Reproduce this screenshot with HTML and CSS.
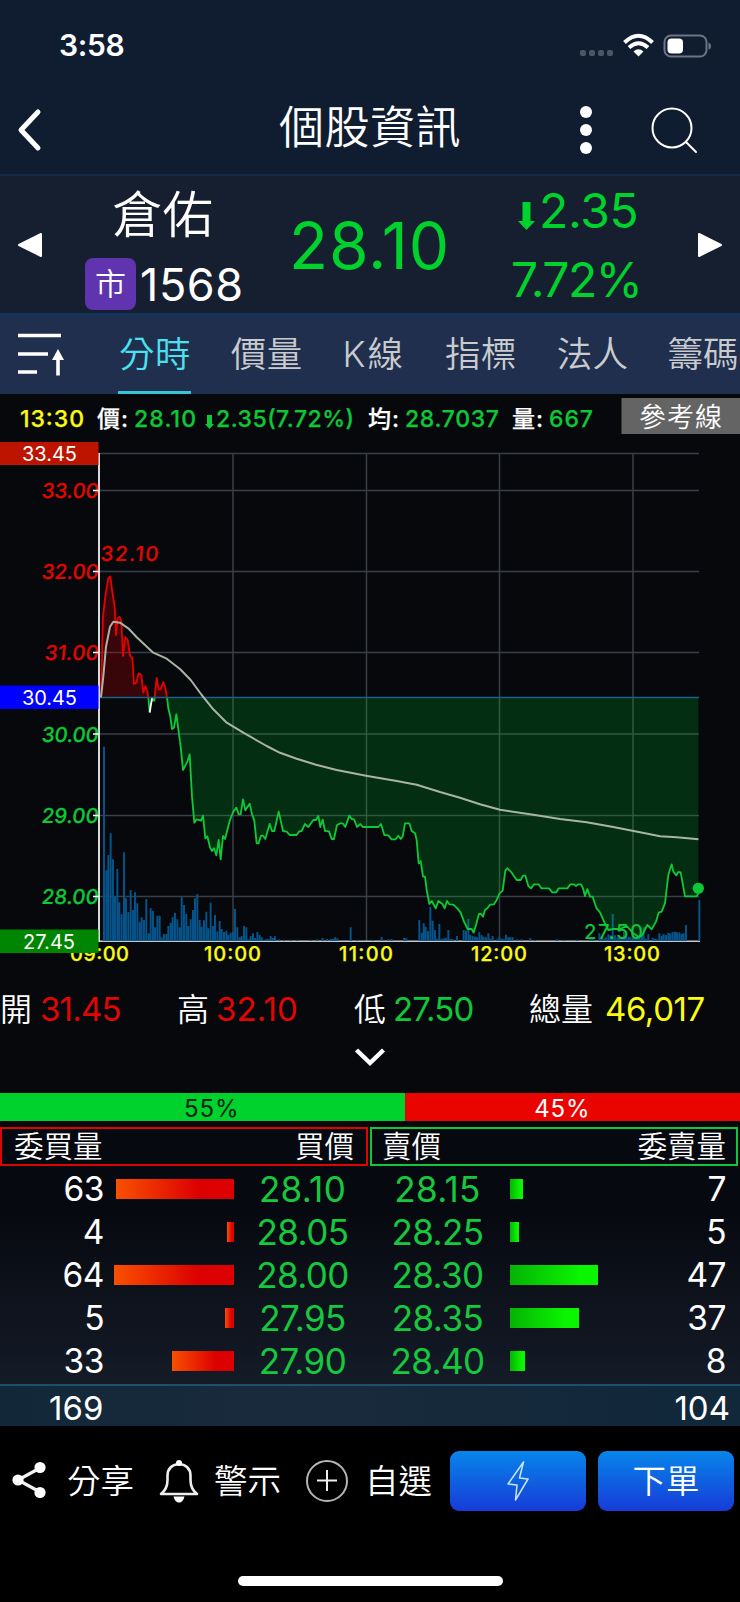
FILE: index.html
```html
<!DOCTYPE html>
<html lang="zh-Hant">
<head>
<meta charset="utf-8">
<title>個股資訊</title>
<link rel="stylesheet" href="styles.css">
</head>
<body>
<div class="app">
  <div class="status">
    <span class="clock">3:58</span>
    <svg class="status-icons" width="134" height="30" viewBox="0 0 134 30">
      <g fill="#4d5667"><rect x="2" y="20" width="6" height="6" rx="2"/><rect x="11" y="20" width="6" height="6" rx="2"/><rect x="20" y="20" width="6" height="6" rx="2"/><rect x="29" y="20" width="6" height="6" rx="2"/></g>
      <g fill="none" stroke="#fff" stroke-width="4"><path d="M46.500 12.500Q60.500 -1 74.500 12.500"/><path d="M51 17.500Q60.500 9 70 17.500"/></g>
      <path d="M55.500 21.500Q60.500 17 65.500 21.500L60.500 26.500Z" fill="#fff"/>
      <rect x="86.500" y="5.500" width="42" height="21" rx="6.500" fill="none" stroke="#6d7584" stroke-width="2"/>
      <path d="M130.500 12.500Q133 13 133 16Q133 19 130.500 19.500Z" fill="#6d7584"/>
      <rect x="89.500" y="8.500" width="15.500" height="15" rx="4" fill="#fff"/>
    </svg>
  </div>
  <header class="nav">
    <svg class="back" width="26" height="44" viewBox="0 0 26 44"><path d="M22 4L5 22L22 40" fill="none" stroke="#fff" stroke-width="5" stroke-linecap="round" stroke-linejoin="round"/></svg>
    <h1>個股資訊</h1>
    <svg class="more" width="14" height="50" viewBox="0 0 14 50" fill="#fff"><circle cx="7" cy="7" r="6"/><circle cx="7" cy="25" r="6"/><circle cx="7" cy="43" r="6"/></svg>
    <svg class="search" width="50" height="50" viewBox="0 0 50 50" fill="none" stroke="#fff" stroke-width="2"><circle cx="22" cy="22" r="19.500"/><path d="M36.500 36.500L46 46" stroke-linecap="round"/></svg>
  </header>
  <section class="quote">
    <svg class="arrow" width="26" height="26" viewBox="0 0 26 26"><path d="M2 13L24 2V24Z" fill="#fff" stroke="#fff" stroke-width="2" stroke-linejoin="round"/></svg>
    <div class="stock">
      <div class="name">倉佑</div>
      <div class="code"><span class="badge">市</span><span class="num">1568</span></div>
    </div>
    <div class="price">28.10</div>
    <div class="change">
      <div class="delta"><svg width="19" height="28" viewBox="0 0 19 28"><path d="M5.500 0H13.500V19H18L9.500 28L1 19H5.500Z" fill="#00d22d"/></svg><span>2.35</span></div>
      <div class="pct">7.72%</div>
    </div>
    <svg class="arrow" width="26" height="26" viewBox="0 0 26 26"><path d="M24 13L2 2V24Z" fill="#fff" stroke="#fff" stroke-width="2" stroke-linejoin="round"/></svg>
  </section>
  <nav class="tabs">
    <svg class="sort" width="48" height="46" viewBox="0 0 48 46"><path d="M0 5.500H43M0 24H30M0 42H19" stroke="#fff" stroke-width="3.600"/><path d="M40 45.500V28" stroke="#fff" stroke-width="3.600"/><path d="M40 19L46 30H34Z" fill="#fff"/></svg>
    <span class="tab on">分時</span><span class="tab">價量</span><span class="tab k">K線</span><span class="tab">指標</span><span class="tab">法人</span><span class="tab last">籌碼</span>
  </nav>
  <section class="chartbox">
    <svg class="chart" width="740" height="586" viewBox="0 394 740 586">
      <g class="info">
        <text class="y" x="20" y="427" textLength="64">13:30</text>
        <text class="w" x="97" y="427" textLength="31">價:</text>
        <text class="g" x="134" y="427" textLength="62">28.10</text>
        <path d="M207 415H212V424H214L209.500 429L205 424H207Z" fill="#0ec837"/>
        <text class="g" x="216" y="427" textLength="138">2.35(7.72%)</text>
        <text class="w" x="368" y="427" textLength="31">均:</text>
        <text class="g" x="405" y="427" textLength="94">28.7037</text>
        <text class="w" x="512" y="427" textLength="31">量:</text>
        <text class="g" x="549" y="427" textLength="44">667</text>
      </g>
      <rect x="621.500" y="398" width="118.500" height="36" fill="#646464"/>
      <text class="ref" x="639" y="426.500" textLength="83">參考線</text>
      <path class="grid" d="M99 453.500H699M99 490.500H699M99 571.500H699M99 652.500H699M99 734H699M99 815.500H699M99 896.500H699M233 454V941M366.500 454V941M499.500 454V941M633 454V941"/>
      <path d="M99 941.300H700" stroke="#c4c8ca" stroke-width="1.600"/>
      <g transform="translate(90 730) scale(.33333)">
        <path class="vol" d="M42 633V50M49 633V421M55 633V375M62 633V310M69 633V388M75 633V498M82 633V417M88 633V517M95 633V553M102 633V367M108 633V505M115 633V546M122 633V480M129 633V540M135 633V487M142 633V520M149 633V575M155 633V562M162 633V570M169 633V507M176 633V610M182 633V535M189 633V543M195 633V592M202 633V557M209 633V557M215 633V622M222 633V612M229 633V612M235 633V588M242 633V578M248 633V562M255 633V548M262 633V568M269 633V592M275 633V500M282 633V525M289 633V552M295 633V588M302 633V568M309 633V540M315 633V505M322 633V492M329 633V570M335 633V590M342 633V571M349 633V545M355 633V595M362 633V518M369 633V588M375 633V555M382 633V605M389 633V573M395 633V597M402 633V606M409 633V602M415 633V615M422 633V608M429 633V606M435 633V537M442 633V592M449 633V622M455 633V618M462 633V588M469 633V592M475 633V628M482 633V618M489 633V610M495 633V624M502 633V606M509 633V614M515 633V622M522 633V630M529 633V627M535 633V628M542 633V618M549 633V624M555 633V619M568 633V628M582 633V629M602 633V629M622 633V629M662 633V629M682 633V628M698 633V624M711 633V627M722 633V627M729 633V627M735 633V622M742 633V625M782 633V592M802 633V629M848 633V629M875 633V621M895 633V628M905 633V627M942 633V624M949 633V625M988 633V570"/>
      </g>
      <g transform="translate(400 750) scale(.33333)">
        <path class="vol" d="M12 573V565M18 573V566M65 573V548M71 573V520M77 573V530M84 573V543M91 573V470M98 573V512M105 573V540M111 573V566M118 573V522M125 573V567M131 573V565M138 573V563M145 573V540M152 573V567M158 573V568M171 573V558M191 573V540M198 573V542M205 573V507M211 573V555M218 573V558M225 573V560M231 573V562M238 573V546M245 573V556M251 573V560M258 573V562M265 573V550M271 573V566M278 573V558M291 573V568M298 573V560M305 573V566M311 573V568M318 573V554M325 573V562M331 573V562M338 573V562M351 573V568M365 573V568M391 573V564M405 573V569M471 573V568M491 573V569M531 573V569M571 573V568M578 573V568M598 573V550M605 573V560M611 573V566M618 573V562M625 573V553M632 573V556M638 573V492M645 573V556M652 573V562M658 573V563M665 573V560M672 573V545M678 573V552M685 573V560M691 573V562M698 573V563M705 573V560M711 573V558M718 573V562M725 573V560M731 573V530M738 573V566M745 573V552M758 573V563M765 573V566M771 573V568M778 573V550M785 573V557M791 573V552M798 573V555M805 573V548M811 573V550M818 573V546M825 573V545M831 573V547M838 573V547M845 573V552M851 573V550M858 573V525M898 573V450"/>
      </g>
      <g transform="translate(0 500) scale(.33333)">
        <path class="up-fill" d="M303 592L309 350L316 288L325 235L331 229L336 270L344 320L348 405L353 355L359 350L364 365L369 468L376 411L383 420L390 467L397 474L402 552L409 548L416 520L424 525L430 578L436 558L442 575L445 592ZM464 592L470 534L476 568L482 568L490 546L496 564L501 592Z"/>
        <path class="down-fill" d="M501 592L505 625L511 650L516 687L522 683L529 643L540 740V592Z"/>
        <path class="up-line" d="M303 592L309 350L316 288L325 235L331 229L336 270L344 320L348 405L353 355L359 350L364 365L369 468L376 411L383 420L390 467L397 474L402 552L409 548L416 520L424 525L430 578L436 558L442 575L445 592M464 592L470 534L476 568L482 568L490 546L496 564L501 592"/>
        <path class="down-line" d="M445 592L449 636M457 594L459 602H463L464 592M501 592L505 625L511 650L516 687L522 683L529 643L540 725"/>
        <path class="down-line turn" d="M449 638L456 594"/>
      </g>
      <g transform="translate(90 730) scale(.33333)">
        <path class="down-fill" d="M270 -98V40L279 120L292 95L299 73L306 200L313 278L320 268L333 272L339 257L346 325L352 319L360 352L366 363L372 355L379 376L386 330L392 388L399 318L405 327L420 270L430 245L439 233L446 253L452 253L459 208L466 241L479 221L486 253L493 272L500 340L506 340L513 317L519 317L526 327L539 282L546 303L553 303L566 245L579 303L590 305L599 315L620 315L628 304L635 303L645 282L655 291L670 270L678 270L685 258L691 291L698 269L705 303L717 304L725 327L732 327L741 285L751 280L758 280L766 291L778 257L785 267L792 268L801 291L811 282L818 291L865 291L873 282L883 315L895 316L905 328L917 328L925 317L932 327L938 320L945 280L958 280L965 303L975 310L980 330L986 400L990 398V-98Z"/>
        <path class="down-line" d="M270 35L272 50L279 120L292 95L299 73L306 200L313 278L320 268L333 272L339 257L346 325L352 319L360 352L366 363L372 355L379 376L386 330L392 388L399 318L405 327L420 270L430 245L439 233L446 253L452 253L459 208L466 241L479 221L486 253L493 272L500 340L506 340L513 317L519 317L526 327L539 282L546 303L553 303L566 245L579 303L590 305L599 315L620 315L628 304L635 303L645 282L655 291L670 270L678 270L685 258L691 291L698 269L705 303L717 304L725 327L732 327L741 285L751 280L758 280L766 291L778 257L785 267L792 268L801 291L811 282L818 291L865 291L873 282L883 315L895 316L905 328L917 328L925 317L932 327L938 320L945 280L958 280L965 303L975 310L980 330L986 400L990 398"/>
      </g>
      <g transform="translate(400 750) scale(.33333)">
        <path class="down-fill" d="M60 -158V338L62 333L69 380L75 380L80 420L88 462L95 453L107 475L115 453L128 463L134 475L141 453L148 463L160 464L172 475L182 488L192 515L203 537L215 537L221 548L228 525L237 492L243 492L249 500L255 480L262 475L270 464L282 463L290 450L299 430L308 422L316 362L322 355L335 368L350 390L362 390L369 377L376 377L385 408L393 415L402 403L416 403L424 415L447 415L457 427L469 427L476 415L502 415L511 403L521 403L528 408L535 403L543 403L549 415L555 438L562 417L570 440L578 440L585 462L590 475L600 487L612 515L625 540L640 537L660 537L680 528L700 550L715 560L725 558L742 525L755 538L768 515L776 488L785 485L795 460L805 375L815 343L820 365L829 376L835 366L842 367L848 400L855 439L890 439L895 430V-158Z"/>
        <path class="down-line" d="M60 338L62 333L69 380L75 380L80 420L88 462L95 453L107 475L115 453L128 463L134 475L141 453L148 463L160 464L172 475L182 488L192 515L203 537L215 537L221 548L228 525L237 492L243 492L249 500L255 480L262 475L270 464L282 463L290 450L299 430L308 422L316 362L322 355L335 368L350 390L362 390L369 377L376 377L385 408L393 415L402 403L416 403L424 415L447 415L457 427L469 427L476 415L502 415L511 403L521 403L528 408L535 403L543 403L549 415L555 438L562 417L570 440L578 440L585 462L590 475L600 487L612 515L625 540L640 537L660 537L680 528L700 550L715 560L725 558L742 525L755 538L768 515L776 488L785 485L795 460L805 375L815 343L820 365L829 376L835 366L842 367L848 400L855 439L890 439L895 430"/>
        <circle cx="895" cy="415" r="17" fill="#0ec837"/>
      </g>
      <path d="M99 697.500H699" stroke="#1f5f8c" stroke-width="1.400"/>
      <path class="avg" d="M101 697.300L103.300 676.700L106 646.700L110 626.700L113.300 621.700L120 622.700L128.300 628.300L136.700 637.300L145 645L153.300 652.700L166.700 658.700L180 669L190.700 680L201.700 695L213.300 709.300L226.700 722.700L243.300 732.700L266.700 746L280 752.800L296.700 758.700L316 764.800L336.700 770L366 775.700L396.700 781L416.700 784.700L440 792L460 797.700L480 804.300L500 809.700L533.300 814.700L560 819L586.700 822.300L613.300 827L640 832.300L660 836.300L676.700 837.300L698.500 839.300"/>
      <path d="M99 453V942" stroke="#f0f2f2" stroke-width="1.800"/>
      <g class="axis">
        <text class="r" transform="translate(41 498) skewX(-7)" textLength="57">33.00</text>
        <text class="r" transform="translate(41 579) skewX(-7)" textLength="57">32.00</text>
        <text class="r" transform="translate(44 660) skewX(-7)" textLength="54">31.00</text>
        <text class="g" transform="translate(41 741.500) skewX(-7)" textLength="57">30.00</text>
        <text class="g" transform="translate(41 823) skewX(-7)" textLength="57">29.00</text>
        <text class="g" transform="translate(41 904) skewX(-7)" textLength="57">28.00</text>
        <text class="r" transform="translate(100 561) skewX(-5)" textLength="58">32.10</text>
        <text class="g thin" x="584" y="938.500" textLength="59">27.50</text>
      </g>
      <path d="M93 490.500H99M93 571.500H99M93 652.500H99M93 734H99M93 815.500H99M93 896.500H99" stroke="#fff" stroke-width="1.500"/>
      <g class="time">
        <text x="70" y="960.500" textLength="59">09:00</text>
        <text x="204" y="960.500" textLength="57">10:00</text>
        <text x="339" y="960.500" textLength="54">11:00</text>
        <text x="471" y="960.500" textLength="56">12:00</text>
        <text x="604" y="960.500" textLength="56">13:00</text>
      </g>
      <g class="tag">
        <rect x="0" y="442" width="98.500" height="23" fill="#bd1400"/><text x="22" y="461" textLength="55">33.45</text>
        <rect x="0" y="685.500" width="98.500" height="23.500" fill="#0000fe"/><text x="22" y="704.500" textLength="55">30.45</text>
        <rect x="0" y="929.500" width="98.500" height="23.500" fill="#008500"/><text x="23" y="948.500" textLength="52">27.45</text>
      </g>
    </svg>
  </section>
  <section class="ohlc">
    <span class="cell c1"><b>開</b><i class="r">31.45</i></span>
    <span class="cell c2"><b>高</b><i class="r">32.10</i></span>
    <span class="cell c3"><b>低</b><i class="g">27.50</i></span>
    <span class="cell c4"><b>總量</b><i class="y">46,017</i></span>
  </section>
  <div class="expand"><svg width="32" height="22" viewBox="0 0 32 22"><path d="M2.500 3L16 16L29.500 3" fill="none" stroke="#fff" stroke-width="4.500"/></svg></div>
  <div class="ratio"><div class="buy">55%</div><div class="sell">45%</div></div>
  <div class="heads"><div class="head bid"><span>委買量</span><span>買價</span></div><div class="head ask"><span>賣價</span><span>委賣量</span></div></div>
  <section class="book">
    <div class="row first"><span class="qty">63</span><span class="bar"><i style="width:118px"></i></span><span class="px">28.10</span><span class="px">28.15</span><span class="bar a"><i style="width:13px"></i></span><span class="qty">7</span></div>
    <div class="row"><span class="qty">4</span><span class="bar"><i style="width:7px"></i></span><span class="px">28.05</span><span class="px">28.25</span><span class="bar a"><i style="width:9px"></i></span><span class="qty">5</span></div>
    <div class="row"><span class="qty">64</span><span class="bar"><i style="width:120px"></i></span><span class="px">28.00</span><span class="px">28.30</span><span class="bar a"><i style="width:88px"></i></span><span class="qty">47</span></div>
    <div class="row"><span class="qty">5</span><span class="bar"><i style="width:9px"></i></span><span class="px">27.95</span><span class="px">28.35</span><span class="bar a"><i style="width:69px"></i></span><span class="qty">37</span></div>
    <div class="row"><span class="qty">33</span><span class="bar"><i style="width:62px"></i></span><span class="px">27.90</span><span class="px">28.40</span><span class="bar a"><i style="width:15px"></i></span><span class="qty">8</span></div>
  </section>
  <div class="total"><span>169</span><span>104</span></div>
  <footer class="foot">
    <svg class="i1" width="36" height="40" viewBox="0 0 36 40"><path d="M28 8L6 20L28 32" fill="none" stroke="#f2f2f2" stroke-width="3.200"/><g fill="#fff"><circle cx="28" cy="7.500" r="5.600"/><circle cx="6" cy="20" r="5.600"/><circle cx="28" cy="32.500" r="5.600"/></g></svg>
    <span class="l1">分享</span>
    <svg class="i2" width="40" height="44" viewBox="0 0 40 44"><path d="M2 35Q8.500 30 8.500 21V17Q8.500 6 20 5Q31.500 6 31.500 17V21Q31.500 30 38 35Z" fill="none" stroke="#eee" stroke-width="2.600" stroke-linejoin="round"/><circle cx="20" cy="4" r="3" fill="#fff"/><path d="M14.500 37.500H25.500Q24 43.500 20 43.500Q16 43.500 14.500 37.500Z" fill="#fff"/></svg>
    <span class="l2">警示</span>
    <svg class="i3" width="44" height="44" viewBox="0 0 44 44" fill="none"><circle cx="22" cy="22" r="20" stroke="#b5b5b5" stroke-width="2"/><path d="M12 21.500H32M22 11V32" stroke="#eee" stroke-width="2"/></svg>
    <span class="l3">自選</span>
    <button class="btn flash"><svg width="24" height="42" viewBox="0 0 24 42"><path d="M17.500 2L2 24L11 25L9.500 40L22 19L13.500 18Z" fill="none" stroke="#c9e6ff" stroke-width="1.500" stroke-linejoin="round"/></svg></button>
    <button class="btn order">下單</button>
  </footer>
  <div class="home"><div class="home-bar"></div></div>
</div>
</body>
</html>
```
FILE: styles.css
```css
* { box-sizing: border-box; }
body { margin: 0; background: #000; font-family: Inter, "Noto Sans CJK TC", sans-serif; color: #fff; }
.app { width: 740px; height: 1602px; overflow: hidden; display: flex; flex-direction: column; background: #000; }
.app > * { flex-shrink: 0; }
svg { display: block; flex-shrink: 0; }

.status { height: 90px; background: #101c30; display: flex; justify-content: space-between; padding: 30px 28px 0 59px; }
.clock { font-size: 30px; font-weight: 600; line-height: 31px; letter-spacing: -0.3px; }
.nav { height: 86px; background: #101c30; border-bottom: 2px solid #12294a; display: flex; align-items: flex-start; }
.back { margin: 18px 0 0 16px; }
.nav h1 { margin: 9px 0 0 237px; width: 182px; font-size: 45px; font-weight: 350; line-height: 58px; white-space: nowrap; letter-spacing: .5px; }
.more { margin: 15px 0 0 118px; }
.search { margin: 16px 0 0 57px; }

.quote { height: 137px; background: #151f2f; display: flex; align-items: flex-start; color: #00d22d; }
.quote .arrow { margin: 56px 0 0 17px; }
.stock { width: 177px; margin-left: 41px; color: #fff; }
.name { height: 82px; font-size: 50.500px; line-height: 78px; padding-left: 28px; font-weight: 350; }
.code { display: flex; align-items: center; height: 52px; margin-left: 1px; }
.badge { width: 51px; height: 52px; border-radius: 8px; background: #5f34ae; font-size: 31px; font-weight: 350; line-height: 52px; text-align: center; }
.code .num { font-size: 45px; line-height: 53px; margin-left: 4px; letter-spacing: .6px; }
.price { width: 190px; margin-left: 28px; font-size: 64px; line-height: 140px; letter-spacing: .9px; }
.change { width: 150px; margin-left: 24px; font-size: 48px; }
.delta { display: flex; height: 68px; line-height: 70px; padding-left: 14px; letter-spacing: -.3px; }
.delta svg { margin: 26px 3px 0 0; }
.pct { line-height: 71px; padding-left: 8px; letter-spacing: -1.5px; }
.quote .arrow:last-child { margin-left: 44px; }

.tabs { height: 81px; border-top: 3px solid #13345a; background: #1f2f4d; display: flex; color: #c9cbce; white-space: nowrap; }
.sort { margin: 14px 52px 0 18px; }
.tab { font-size: 35.500px; font-weight: 350; line-height: 77px; height: 78px; width: 72.500px; margin-right: 39.300px; padding-left: 1px; flex-shrink: 0; letter-spacing: .4px; }
.tab.k { width: 63px; letter-spacing: 2px; }
.tab.on { color: #4ce0f0; border-bottom: 3px solid #35c5d4; }
.tab.last { width: 71px; margin-right: 0; padding-left: 0; letter-spacing: 0; }

.chartbox { height: 586px; background: #06080c; }
.info { font-size: 23px; font-weight: 500; stroke-width: .25; }
.info .g, .axis .g { stroke: #0ec837; }
.info .y { stroke: #fbfb10; }
.info .w { stroke: #fff; }
.w { fill: #fff; }
.r { fill: #e10600; color: #e10600; }
.g { fill: #0ec837; color: #0ec837; }
.y { fill: #fbfb10; color: #fbfb10; }
.ref { font-size: 27px; fill: #fff; font-weight: 350; }
.grid { stroke: #3b3e46; stroke-width: 1.5; fill: none; }
.vol { stroke: #05558c; stroke-width: 5.8; fill: none; }
.up-fill { fill: rgba(200, 0, 0, .26); }
.down-fill { fill: rgba(0, 200, 40, .2); }
.up-line, .down-line { fill: none; stroke: #e60000; stroke-width: 5.5; stroke-linejoin: round; }
.down-line { stroke: #0ec837; }
.down-line.turn { stroke: #fff; }
.avg { fill: none; stroke: #a9b3a6; stroke-width: 2; stroke-linejoin: round; }
.axis { font-size: 20.5px; font-weight: 500; stroke-width: .2; }
.axis .r { stroke: #e10600; }
.axis .thin { font-weight: 400; }
.time { font-size: 20px; font-weight: 500; fill: #fbfb10; stroke: #fbfb10; stroke-width: .25; }
.tag { font-size: 20px; fill: #fff; }

.ohlc { height: 60px; background: #06080c; display: flex; font-size: 33px; line-height: 59px; }
.cell { display: flex; white-space: nowrap; }
.cell b { font-weight: 350; font-size: 32px; }
.cell i { font-style: normal; letter-spacing: -.8px; }
.c1 { width: 177px; } .c1 b { width: 40px; }
.c2 { width: 177px; } .c2 b { width: 39px; } .cell.c2 i { letter-spacing: .1px; }
.c3 { width: 175px; } .c3 b { width: 39px; }
.c4 b { width: 76px; } .cell.c4 i { letter-spacing: -.4px; }
.expand { height: 53px; background: #06080c; display: flex; justify-content: center; padding-top: 7px; }
.ratio { height: 34px; background: #06080c; display: flex; font-size: 24px; line-height: 31px; text-align: center; }
.buy { width: 404.500px; height: 28px; background: #00d22d; color: #06240c; padding-left: 19px; letter-spacing: .9px; }
.sell { width: 335.500px; height: 28px; background: #ea0400; padding-right: 20px; letter-spacing: .8px; }
.heads { height: 40px; background: #070910; display: flex; gap: 2px; }
.head { width: 368px; height: 39px; border: 2px solid #dc0500; display: flex; justify-content: space-between; padding: 0 12px; font-size: 29.500px; font-weight: 350; line-height: 35px; }
.head.ask { border-color: #12c53a; padding: 0 10px; }
.book { height: 217px; padding-top: 1px; background: linear-gradient(#070910 20%, #141b27); }
.row { display: flex; align-items: center; height: 43px; line-height: 43px; }
.row .bar { margin-top: -1px; }
.qty { width: 104px; text-align: right; font-size: 33.500px; letter-spacing: -.5px; }
.bar { width: 130px; display: flex; justify-content: flex-end; }
.bar i { height: 20px; background: linear-gradient(90deg, #f95000, #dc0000 70%); }
.bar.a { width: 130px; justify-content: flex-start; }
.bar.a i { background: linear-gradient(90deg, #05b305, #0af500 80%); }
.px { width: 137px; text-align: center; font-size: 35px; color: #16c83e; letter-spacing: -.6px; }
.row.first .px { letter-spacing: .3px; }
.bar + .px { margin-right: -2px; }
.row .bar.a { margin-left: 4px; }
.bar.a + .qty { width: 86px; }
.total { height: 42px; background: linear-gradient(90deg, #122838, #192a3c 40%, #10283a); border-top: 2px solid #1c516b; display: flex; justify-content: space-between; padding: 0 10px 0 49px; font-size: 33px; line-height: 44px; }

.foot { height: 120px; background: #000; display: flex; padding-top: 25px; font-size: 33.500px; font-weight: 350; line-height: 61px; }
.foot span { white-space: nowrap; }
.i1 { margin: 9px 0 0 12px; }
.l1 { width: 92px; margin-left: 19px; }
.i2 { margin: 8px 0 0 0; }
.l2 { width: 91px; margin-left: 15px; }
.i3 { margin-top: 8px; }
.l3 { width: 85px; margin-left: 16px; }
.btn { width: 136px; height: 60px; border: 0; padding: 0; border-radius: 9px; background: linear-gradient(#0786ea, #173bd8); color: #fff; font: inherit; display: flex; justify-content: center; align-items: center; flex-shrink: 0; }
.btn + .btn { margin-left: 12px; }
.home { height: 56px; display: flex; justify-content: center; padding-top: 30px; background: #000; }
.home-bar { width: 265px; height: 10px; border-radius: 5px; background: #fff; }
```
